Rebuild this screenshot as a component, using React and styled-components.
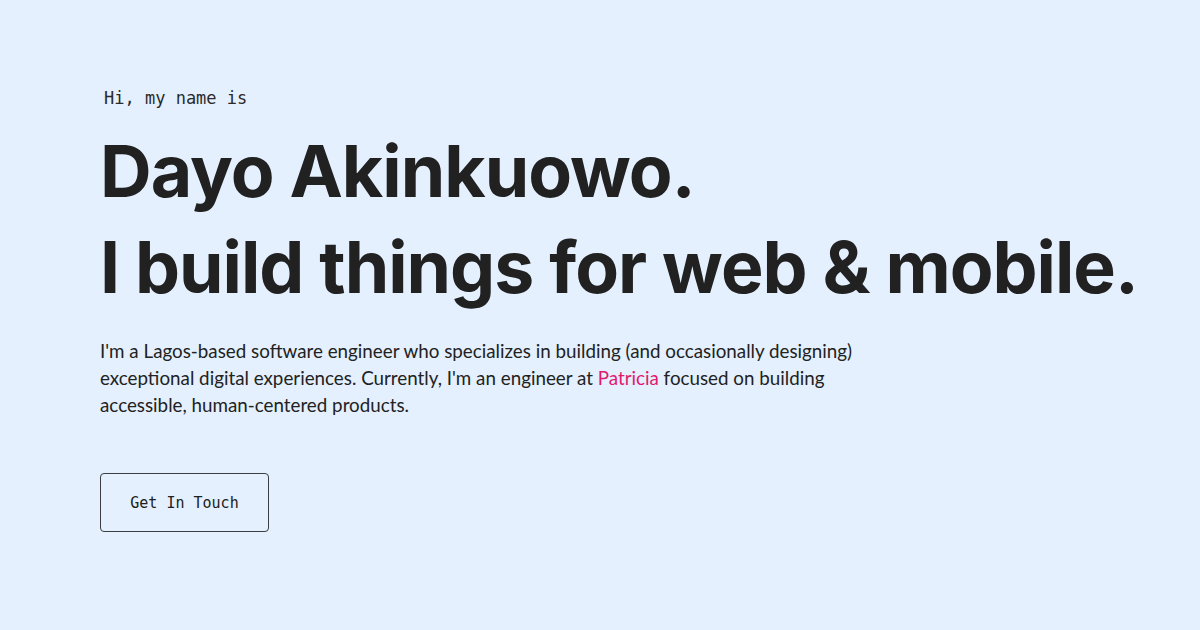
import styled, { createGlobalStyle } from "styled-components"

const GlobalStyle = createGlobalStyle`
    * {
        box-sizing: border-box;
    }

    body {
        margin: 0;
        background-color: #e4f0fe;
        font-family: Inter, "Noto Sans", sans-serif;
        color: #202020;
    }
`

export default function App() {
    return (
        <Hero>
            <GlobalStyle />
            <Greeting>Hi, my name is</Greeting>
            <Title>
                Dayo Akinkuowo.
                <br />
                I build things for web &amp; mobile.
            </Title>
            <Intro>
                I'm a Lagos-based software engineer who specializes in building (and occasionally designing)
                exceptional digital experiences. Currently, I'm an engineer at <Highlight>Patricia</Highlight> focused on building
                accessible, human-centered products.
            </Intro>
            <ContactButton>Get In Touch</ContactButton>
        </Hero>
    )
}

const Hero = styled.main`
    width: 1200px;
    height: 630px;
    padding: 86px 0 0 100px;
    display: flex;
    flex-direction: column;
    align-items: flex-start;
`

const Greeting = styled.p`
    margin: 0 0 0 4px;
    font-family: "DejaVu Sans Mono", "Liberation Mono", monospace;
    font-size: 17px;
    line-height: 25px;
    color: #2a2a2a;
`

const Title = styled.h1`
    margin: 12px 0 0 0;
    font-family: Inter, sans-serif;
    font-weight: 700;
    font-size: 71.5px;
    line-height: 96px;
    letter-spacing: -1px;
    color: #212121;
`

const Intro = styled.p`
    margin: 22px 0 0 0;
    width: 790px;
    font-family: Lato, sans-serif;
    font-size: 18.8px;
    line-height: 27px;
    color: #222;
`

const Highlight = styled.span`
    color: #e2186f;
`

const ContactButton = styled.button`
    margin-top: 55px;
    width: 169px;
    height: 59px;
    flex-shrink: 0;
    background: transparent;
    border: 1px solid #3a3d42;
    border-radius: 4px;
    font-family: "DejaVu Sans Mono", "Liberation Mono", monospace;
    font-size: 15px;
    color: #202020;
    cursor: pointer;
`
